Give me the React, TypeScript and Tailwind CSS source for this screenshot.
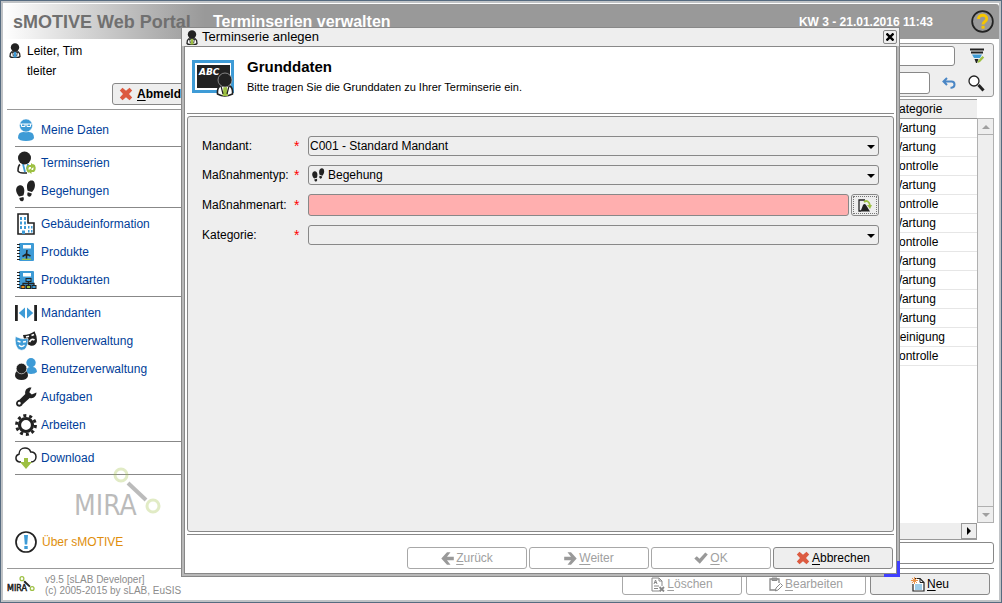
import type { ReactNode } from "react";

const INK = "#222222";
const BLUE = "#3e9bd6";
const GREEN = "#9dc043";

interface IconProps {
  className?: string;
}

function PersonIcon({ className = "", accent = GREEN }: IconProps & { accent?: string }) {
  return (
    <svg viewBox="0 0 12 15" className={className} aria-hidden="true">
      <path d="M2.500 9Q1 10 1 13.500q1 1 2.500 1h5q1.500 0 2.500-1Q11 10 9.500 9z" fill="#fff" stroke={INK} strokeWidth="1.300" />
      <path d="M5 8.500h2l.7 6H4.300z" fill={accent} />
      <path d="M3.500 9l.8 4M8.500 9l-.8 4" stroke={INK} strokeWidth=".8" />
      <circle cx="6" cy="4.500" r="4.200" fill={INK} />
    </svg>
  );
}

function FeetIcon({ className = "" }: IconProps) {
  return (
    <svg viewBox="0 0 20 22" className={className} fill={INK} aria-hidden="true">
      <path d="M3 5.500C6 4.500 8.300 7 8.300 10.500c0 2.500-.6 4-1 5L3 16.500C1 14-.3 11.500.2 9 .5 7 1.500 6 3 5.500z" />
      <path d="M3.300 18l4-1c1 1.800.6 3.700-.8 4.200-1.600.5-3-.9-3.200-3.200z" />
      <path d="M16.500.6c-3-.9-5.300 1.800-5.500 5.200-.1 2.300.3 3.800.7 5l4.300 1.200c2-2.200 3.200-4.700 2.900-7.400C18.700 2.400 17.900 1 16.500.6z" />
      <path d="M11.800 12.300l4 1.100c-.3 2.400-1.700 3.700-3.200 3.200-1.400-.5-1.800-2.300-.8-4.300z" />
    </svg>
  );
}

function UserDataIcon() {
  return (
    <svg viewBox="0 0 22 22" className="size-[22px]" aria-hidden="true">
      <path d="M3 19q0-6 5-6h6q5 0 5 6-1 3-8 3t-8-3z" fill={BLUE} />
      <circle cx="11" cy="6.500" r="6.500" fill={BLUE} stroke="#fff" strokeWidth=".5" />
      <path d="M5 5h12M6.500 5v2.500h3.500V5M12 5v2.500h3.500V5" fill="none" stroke="#fff" strokeWidth="1" />
    </svg>
  );
}

function SeriesIcon() {
  return (
    <svg viewBox="0 0 22 24" className="h-6 w-[22px]" aria-hidden="true">
      <path d="M5 13.500Q3 15 3 20q1 2 5 2h4" fill="#fff" stroke={INK} strokeWidth="1.600" />
      <path d="M8 13l2 8M13 13l-1 5" stroke={BLUE} strokeWidth="1.800" />
      <circle cx="9.500" cy="7" r="6.500" fill={INK} />
      <g fill="none" stroke={GREEN} strokeWidth="2.200">
        <path d="M14 21a4 4 0 0 1-.5-6h4" />
        <path d="M18 14a4 4 0 0 1 .5 6h-4" />
      </g>
      <path d="M16 12l4 3-4 3zM16.500 17v6l-4-3z" fill={GREEN} />
    </svg>
  );
}

function BuildingIcon() {
  return (
    <svg viewBox="0 0 20 22" className="h-[22px] w-5" aria-hidden="true">
      <path d="M2 21V1h10v9h6v11z" fill="#fff" stroke={INK} strokeWidth="1.600" />
      <path
        d="M4 4h2v3H4zM8 4h2v3H8zM4 8.500h2v3H4zM8 8.500h2v3H8zM4 13h2v3H4zM8 13h2v3H8zM12 13h1.500v2.500H12zM15 13h1.500v2.500H15zM12 17h1.500v2.500H12zM15 17h1.500v2.500H15zM6 17.500h3V21H6z"
        fill={BLUE}
      />
    </svg>
  );
}

function NotebookIcon({ kinds = false }: { kinds?: boolean }) {
  return (
    <svg viewBox="0 0 22 20" className="h-5 w-[22px]" aria-hidden="true">
      <rect x="4" y="1" width="15" height="18" rx="1" fill={BLUE} />
      <path d="M2 2.500h3M2 5.500h3M2 8.500h3M2 11.500h3M2 14.500h3M2 17.500h3" stroke={INK} strokeWidth="1.200" />
      <rect x="8" y="3" width="8" height="3.500" fill="#fff" />
      {kinds ? (
        <g>
          <path d="M13.500 11v3M8 15.500v-2h11v2M13.500 13v2" fill="none" stroke={INK} strokeWidth="1.300" />
          <rect x="11" y="8.500" width="5" height="3" fill={BLUE} stroke={INK} />
          <rect x="6" y="15.500" width="4" height="3" fill="#e8901a" stroke={INK} />
          <rect x="11.500" y="15.500" width="4" height="3" fill={GREEN} stroke={INK} />
          <rect x="17" y="15.500" width="4" height="3" fill={BLUE} stroke={INK} />
        </g>
      ) : (
        <g>
          <path d="M11.500 17V12L12 8M11.500 12l4 2M11.500 12L7.500 14.500" fill="none" stroke={INK} strokeWidth="1.500" />
          <path d="M7 17.300h9" stroke={GREEN} strokeWidth="1.300" />
        </g>
      )}
    </svg>
  );
}

function ClientsIcon() {
  return (
    <svg viewBox="0 0 22 16" className="h-4 w-[22px]" aria-hidden="true">
      <path d="M0 0h2.800v16H0zM19.200 0H22v16h-2.800z" fill={INK} />
      <path d="M10 2.500v11L3.800 8zM12 2.500v11L18.200 8z" fill={BLUE} />
    </svg>
  );
}

function MasksIcon() {
  return (
    <svg viewBox="0 0 22 20" className="h-5 w-[22px]" aria-hidden="true">
      <path d="M8 4Q15 4 19.500.3 22.500 6 21.800 11q-1.500 4.500-6.500 3.500L10 12z" fill={INK} />
      <path d="M11 6l3-.8M16.500 4.500l2.500-1M14.500 11q2-4 5-2" fill="none" stroke="#fff" strokeWidth="1.700" />
      <path d="M.5 5.500Q7 9 13 7.500 13.500 15 9.500 18.500q-3 1.800-6.500-.5Q-.8 13 .5 5.500z" fill={BLUE} stroke="#fff" strokeWidth=".6" />
      <path d="M2.500 10l3 1M8 11l3-.5M4 14q2.500 3 5.500 0" fill="none" stroke="#fff" strokeWidth="1.400" />
    </svg>
  );
}

function UsersIcon() {
  return (
    <svg viewBox="0 0 22 22" className="size-[22px]" aria-hidden="true">
      <path d="M11.500 13q0-4 4-4h2q4 0 4.500 5-2 2-6 2-4 0-4.500-3z" fill={BLUE} />
      <circle cx="16" cy="4.800" r="4.700" fill={BLUE} />
      <path d="M0 18q0-5.500 4-5.500h5q4 0 4 5.500-1 4-6.500 4T0 18z" fill={INK} />
      <circle cx="6.500" cy="10.500" r="5.300" fill={INK} stroke="#fff" strokeWidth=".6" />
    </svg>
  );
}

function WrenchIcon() {
  return (
    <svg viewBox="0 0 22 20" className="h-5 w-[22px]" aria-hidden="true">
      <path
        d="M16.500.6l-2.200 4.600 2.500 2.300 4.600-2c.2 4-3 6.500-6.700 5.400L7.500 17.500c-.6 1.800-3 2.800-4.900 1.800C.6 18 .5 15.200 2.300 13.700c.8-.7 1.500-.9 2.200-.9L10.300 7C9.300 3.400 12.500-.3 16.500.6zM4.200 14.800a1.500 1.500 0 1 0 .1 3 1.500 1.500 0 0 0-.1-3z"
        fill={INK}
      />
    </svg>
  );
}

function GearIcon() {
  return (
    <svg viewBox="0 0 22 22" className="size-[22px]" aria-hidden="true">
      <circle cx="11" cy="11" r="6.500" fill="none" stroke={INK} strokeWidth="3.200" />
      <circle cx="11" cy="11" r="9.400" fill="none" stroke={INK} strokeWidth="3" strokeDasharray="3 2.906" />
    </svg>
  );
}

function CloudIcon() {
  return (
    <svg viewBox="0 0 22 22" className="size-[22px]" aria-hidden="true">
      <path
        d="M6 15H4.500C2 14.500.8 12.500 1 10.500 1.200 8.500 2.500 7.500 4 7.200 4 3.500 6.500 1 10 1c3 0 5 1.600 5.700 4 3-.3 5.300 1.800 5.300 4.800 0 3-2 5.200-5 5.200"
        fill="none"
        stroke={INK}
        strokeWidth="1.500"
      />
      <path d="M9 11h4v4h4l-6 7-6-7h4z" fill={GREEN} />
    </svg>
  );
}

function InfoIcon() {
  return (
    <svg viewBox="0 0 22 22" className="size-[22px]" aria-hidden="true">
      <circle cx="11" cy="11" r="10" fill="#fff" stroke={INK} strokeWidth="1.700" />
      <path d="M9 4h4l-.8 9.500H9.800zM9.300 15h3.400v3H9.300z" fill={BLUE} />
    </svg>
  );
}

function CrossIcon({ className = "" }: IconProps) {
  return (
    <svg viewBox="0 0 14 14" className={className} fill="#dc5b41" aria-hidden="true">
      <path d="M3.500.8L7 3.800l3.500-3L13.200 3.500 10 7l3.200 3.500-2.700 2.700L7 10.200l-3.500 3L.8 10.500 4 7 .8 3.500z" />
    </svg>
  );
}

function ArrowIcon({ flip = false }: { flip?: boolean }) {
  return (
    <svg viewBox="0 0 13 13" className={`size-[13px] ${flip ? "rotate-180" : ""}`} fill="#999999" aria-hidden="true">
      <path d="M6 .3h3.500L6 4.700h6.800v3.600H6l3.500 4.400H6L.3 6.500z" />
    </svg>
  );
}

function CheckIcon() {
  return (
    <svg viewBox="0 0 14 12" className="h-3 w-3.5" fill="#999999" aria-hidden="true">
      <path d="M.3 6.500l2.500-2.300L5.500 6.800 11.300.5l2.500 2L5.800 11.700z" />
    </svg>
  );
}

function BoardIcon() {
  return (
    <svg viewBox="0 0 43 38" className="h-[38px] w-[43px]" aria-hidden="true">
      <rect x="1.500" y="2.500" width="39" height="30" fill="#fff" stroke={BLUE} strokeWidth="3" />
      <rect x="5" y="6" width="33" height="23" fill={INK} />
      <text x="7" y="16" fill="#fff" fontSize="9" fontWeight="bold" fontStyle="italic" fontFamily="DejaVu Sans, sans-serif">
        ABC
      </text>
      <path d="M28 27q-3 2-2.500 8 7 4 15 0 .5-6-2.500-8z" fill="#fff" stroke={INK} strokeWidth="1.600" />
      <path d="M31.500 28h3.500l1 9h-5.500z" fill={GREEN} />
      <path d="M29 27l2 8M37 27l-2 8" stroke={INK} strokeWidth="1.200" />
      <circle cx="33" cy="21" r="7" fill={INK} stroke="#c8c8c8" strokeWidth=".6" />
    </svg>
  );
}

function PickIcon() {
  return (
    <svg viewBox="0 0 14 13" className="h-[13px] w-3.5" aria-hidden="true">
      <path d="M7 1H1v11h2" fill="none" stroke={INK} strokeWidth="1.300" />
      <path d="M2.500 12.500L5 6q1.500-2 3 0l4 6.500z" fill={INK} />
      <path d="M6 3q4-3 6 3" fill="none" stroke={GREEN} strokeWidth="1.800" />
      <path d="M9 6h5l-2 4z" fill={GREEN} />
    </svg>
  );
}

function FilterIcon() {
  return (
    <svg viewBox="0 0 16 16" className="size-4" aria-hidden="true">
      <path d="M1 1.500h14M2 4.500h12" stroke={INK} strokeWidth="2" />
      <path d="M3 6.500h10l-2 3.500H5z" fill={BLUE} />
      <path d="M5.500 11h4L8 15H7z" fill={INK} />
      <path d="M8.500 15l.7-2.500L13.500 8l1.700 1.500L11 14z" fill={GREEN} />
    </svg>
  );
}

function UndoIcon() {
  return (
    <svg viewBox="0 0 14 12" className="h-3 w-3.5" aria-hidden="true">
      <path d="M5 1L1.500 4.500 5 8M2 4.500h7.500q3 0 3 3t-3 3.200H8.500" fill="none" stroke="#4a86c5" strokeWidth="2" />
    </svg>
  );
}

function SearchIcon() {
  return (
    <svg viewBox="0 0 17 17" className="size-[17px]" aria-hidden="true">
      <circle cx="6" cy="6" r="5" fill="#fff" stroke={INK} strokeWidth="1.300" />
      <path d="M10.500 10l5 5.500" stroke={INK} strokeWidth="3" />
    </svg>
  );
}

function HelpIcon() {
  return (
    <svg viewBox="0 0 24 24" className="size-[23px]" aria-hidden="true">
      <circle cx="12" cy="12" r="10.800" fill="none" stroke={INK} strokeWidth="1.800" />
      <path d="M7.800 9.300c0-5 8.600-5 8.600-.3 0 3-3.900 3.200-3.900 6" fill="none" stroke="#f7c600" strokeWidth="3" />
      <rect x="11" y="16.500" width="3.200" height="3" fill="#f7c600" />
    </svg>
  );
}

function DeleteDocIcon() {
  return (
    <svg viewBox="0 0 14 15" className="h-[15px] w-3.5" fill="none" stroke="#888888" aria-hidden="true">
      <path d="M8 14H1V1h7l3 3v5M8 1v3h3" />
      <path d="M3 7l1.500-4L6 7M3.500 5.500h2M3 9h5M3 11.500h4" />
      <path d="M8.500 10l4.500 4.500M13 10l-4.500 4.500" strokeWidth="1.800" />
    </svg>
  );
}

function EditDocIcon() {
  return (
    <svg viewBox="0 0 14 15" className="h-[15px] w-3.5" fill="none" stroke="#888888" aria-hidden="true">
      <path d="M7 13H1V2h9v4" strokeWidth="1.300" />
      <path d="M3 1h5v2.500H3z" fill="#999999" />
      <path d="M6.500 14l.5-3 4.500-4.500 2 2L9 13z" />
    </svg>
  );
}

function NewDocIcon() {
  return (
    <svg viewBox="0 0 14 15" className="h-[15px] w-3.5" aria-hidden="true">
      <path d="M4 1.500h5l4 4V14H2V7" fill="#fff" stroke={INK} strokeWidth="1.200" />
      <path d="M9 1.500v4h4" fill="none" stroke={INK} />
      <path d="M4 8h7M4 10h7M4 12h7" stroke={BLUE} strokeWidth="1.200" />
      <path d="M3.500 0v7M0 3.500h7M1 1l5 5M6 1L1 6" stroke="#e98b3c" strokeWidth=".9" />
    </svg>
  );
}

function MiraLogo({ faded = false }: { faded?: boolean }) {
  return (
    <svg viewBox="0 0 88 56" className={faded ? "h-14 w-[88px] opacity-30" : "h-[18px] w-7"} aria-label="MIRA">
      <text x="0" y="48" fontSize="28" fill={INK} stroke={INK} strokeWidth={faded ? 0 : 1.5} fontFamily="Liberation Sans Narrow, DejaVu Sans Condensed, sans-serif">
        MIRA
      </text>
      <path d="M54 16l18 17" stroke={INK} strokeWidth={faded ? 4 : 6} />
      <circle cx="47" cy="8" r="6" fill="none" stroke={GREEN} strokeWidth={faded ? 3 : 4} />
      <circle cx="79" cy="39" r="6" fill="none" stroke={GREEN} strokeWidth={faded ? 3 : 4} />
    </svg>
  );
}

const navGroups: { label: string; icon: ReactNode }[][] = [
  [{ label: "Meine Daten", icon: <UserDataIcon /> }],
  [
    { label: "Terminserien", icon: <SeriesIcon /> },
    { label: "Begehungen", icon: <FeetIcon className="h-[22px] w-5" /> },
  ],
  [
    { label: "Gebäudeinformation", icon: <BuildingIcon /> },
    { label: "Produkte", icon: <NotebookIcon /> },
    { label: "Produktarten", icon: <NotebookIcon kinds /> },
  ],
  [
    { label: "Mandanten", icon: <ClientsIcon /> },
    { label: "Rollenverwaltung", icon: <MasksIcon /> },
    { label: "Benutzerverwaltung", icon: <UsersIcon /> },
    { label: "Aufgaben", icon: <WrenchIcon /> },
    { label: "Arbeiten", icon: <GearIcon /> },
  ],
  [{ label: "Download", icon: <CloudIcon /> }],
];

const categories = [
  "Wartung",
  "Wartung",
  "Kontrolle",
  "Wartung",
  "Kontrolle",
  "Wartung",
  "Kontrolle",
  "Wartung",
  "Wartung",
  "Wartung",
  "Wartung",
  "Reinigung",
  "Kontrolle",
];

interface ActionButtonProps {
  icon: ReactNode;
  label: string;
  disabled?: boolean;
}

function ActionButton({ icon, label, disabled = false }: ActionButtonProps) {
  return (
    <button
      type="button"
      disabled={disabled}
      className="flex h-[22px] w-[120px] items-center justify-center gap-0.5 rounded-[3px] border border-[#888888] bg-[#eeeeee] disabled:border-[#a8a8a8] disabled:bg-white disabled:text-[#a0a0a0]"
    >
      {icon}
      <span>
        <span className="underline underline-offset-2">{label[0]}</span>
        {label.slice(1)}
      </span>
    </button>
  );
}

function Sidebar() {
  return (
    <aside className="flex w-[202px] shrink-0 flex-col pl-1">
      <div className="flex gap-1.5 pt-0.5 pl-0.5">
        <PersonIcon className="mt-0.5 h-[15px] w-3" accent={BLUE} />
        <div className="leading-5">
          <p>Leiter, Tim</p>
          <p>tleiter</p>
        </div>
      </div>
      <button
        type="button"
        className="mt-0.5 ml-[105px] flex h-[22px] w-[90px] items-center gap-1 rounded-[3px] border border-[#888888] bg-[#eeeeee] pl-1.5 font-bold"
      >
        <CrossIcon className="size-3.5" />
        <span>
          <span className="underline underline-offset-2">A</span>bmelden
        </span>
      </button>
      <nav className="mt-1 border-t border-[#999999] pt-1 pl-2">
        {navGroups.map((group) => (
          <ul key={group[0].label} className="border-b border-[#888888] py-0.5">
            {group.map((item) => (
              <li key={item.label}>
                <a href="#" className="flex h-7 items-center gap-1 text-[#003d99]">
                  <span className="flex w-[22px] justify-center">{item.icon}</span>
                  {item.label}
                </a>
              </li>
            ))}
          </ul>
        ))}
      </nav>
      <div className="-mt-2 pl-[67px]">
        <MiraLogo faded />
      </div>
      <a href="#" className="mt-2 flex items-center gap-[5px] pl-2 text-[#e08e0b]">
        <InfoIcon />
        Über sMOTIVE
      </a>
      <footer className="mt-auto flex h-8 items-center gap-2.5 border-t border-[#999999] text-[10px] leading-[11px] text-[#8c8c8c]">
        <MiraLogo />
        <p>
          v9.5 [sLAB Developer]
          <br />
          (c) 2005-2015 by sLAB, EuSIS
        </p>
      </footer>
    </aside>
  );
}

function SeriesPage() {
  return (
    <main className="flex min-w-0 flex-1 flex-col pr-[5px]">
      <section className="mt-1 flex h-[54px] flex-col justify-between rounded-[3px] border border-[#999999] bg-[#eeeeee] p-0.5 pr-2">
        <div className="flex items-center">
          <input aria-label="Suche" className="h-5 min-w-0 flex-1 rounded-[3px] border border-[#888888] bg-white" />
          <button type="button" aria-label="Filter" className="ml-3.5">
            <FilterIcon />
          </button>
        </div>
        <div className="flex items-center">
          <input aria-label="Filterwert" className="h-[22px] min-w-0 flex-1 rounded-[3px] border border-[#888888] bg-white" />
          <button type="button" aria-label="Zurücksetzen" className="ml-3">
            <UndoIcon />
          </button>
          <button type="button" aria-label="Suchen" className="ml-3">
            <SearchIcon />
          </button>
        </div>
      </section>
      <div className="mt-0.5 flex min-h-0 flex-1">
        <div className="flex min-w-0 flex-1 flex-col">
          <table className="w-full table-fixed border-collapse">
            <thead>
              <tr className="h-[19px] border-y border-[#999999] bg-[#eeeeee]">
                <th />
                <th className="w-[86px] text-left font-normal">Kategorie</th>
              </tr>
            </thead>
            <tbody>
              {categories.map((category, index) => (
                <tr key={index} className="h-[19px] border-b border-[#e6e6e6]">
                  <td />
                  <td>{category}</td>
                </tr>
              ))}
            </tbody>
          </table>
          <div className="mt-auto flex h-[17px] justify-end border-b border-[#999999] bg-[#eeeeee]">
            <button type="button" aria-label="Nach rechts" className="flex w-4 items-center justify-center border border-[#999999]">
              <svg viewBox="0 0 4 8" className="h-2 w-1" aria-hidden="true">
                <path d="M0 0l4 4-4 4z" />
              </svg>
            </button>
          </div>
        </div>
        <div className="mt-[19px] mb-[17px] flex w-[17px] flex-col border border-[#b0b0b0] bg-[#eeeeee]">
          <button type="button" aria-label="Nach oben" className="flex h-4 items-center justify-center border-b border-[#b0b0b0]">
            <svg viewBox="0 0 8 4" className="h-1 w-2" fill="#a0a0a0" aria-hidden="true">
              <path d="M0 4l4-4 4 4z" />
            </svg>
          </button>
          <button type="button" aria-label="Nach unten" className="mt-auto flex h-4 items-center justify-center border-t border-[#b0b0b0]">
            <svg viewBox="0 0 8 4" className="h-1 w-2" fill="#a0a0a0" aria-hidden="true">
              <path d="M0 0l4 4 4-4z" />
            </svg>
          </button>
        </div>
      </div>
      <input aria-label="Bemerkung" className="mt-0.5 h-[22px] rounded-[3px] border border-[#888888] bg-white" />
      <div className="mt-1 flex justify-end gap-1 border-t border-[#888888] pt-1 pr-1 pb-[5px]">
        <ActionButton icon={<DeleteDocIcon />} label="Löschen" disabled />
        <ActionButton icon={<EditDocIcon />} label="Bearbeiten" disabled />
        <ActionButton icon={<NewDocIcon />} label="Neu" />
      </div>
    </main>
  );
}

interface FieldProps {
  id: string;
  label: string;
  children: ReactNode;
}

function Field({ id, label, children }: FieldProps) {
  return (
    <div className="flex items-center">
      <label htmlFor={id} className="w-[92px] shrink-0">
        {label}
      </label>
      <span className="w-3.5 shrink-0 text-sm leading-4 text-[#ff0000]">*</span>
      {children}
    </div>
  );
}

interface ComboProps {
  id: string;
  value?: string;
  icon?: ReactNode;
}

function Combo({ id, value = "", icon }: ComboProps) {
  return (
    <div className="relative min-w-0 flex-1">
      <select
        id={id}
        defaultValue={value}
        className={`block h-5 w-full appearance-none rounded-[3px] border border-[#888888] bg-[#eeeeee] ${icon ? "pl-[19px]" : "pl-px"}`}
      >
        <option>{value}</option>
      </select>
      {icon ? <span className="pointer-events-none absolute top-[3px] left-1">{icon}</span> : null}
      <svg viewBox="0 0 8 4" className="pointer-events-none absolute top-[9px] right-1 h-1 w-2" aria-hidden="true">
        <path d="M0 0h8L4 4z" />
      </svg>
    </div>
  );
}

function CreateSeriesDialog() {
  return (
    <div
      role="dialog"
      aria-labelledby="dialog-title"
      className="absolute top-6 right-[99px] bottom-[23px] left-[178px] flex flex-col border border-[#888888] bg-[#b8b8b8]"
    >
      <div className="flex h-[18px] items-center bg-[#eeeeee] pr-0.5 pl-1">
        <PersonIcon className="h-[15px] w-3" />
        <h2 id="dialog-title" className="ml-1 text-[13px] leading-4">
          Terminserie anlegen
        </h2>
        <button
          type="button"
          aria-label="Schließen"
          className="ml-auto flex size-3.5 items-center justify-center rounded-[2px] border border-[#888888]"
        >
          <svg viewBox="0 0 8 8" className="size-2" stroke="#000" strokeWidth="2.400" aria-hidden="true">
            <path d="M.5.5l7 7M7.500.5l-7 7" />
          </svg>
        </button>
      </div>
      <div className="mx-0.5 mb-0.5 flex flex-1 flex-col border border-[#888888] bg-white px-0.5">
        <header className="flex h-[67px] gap-3 border-b border-[#888888] pt-3 pl-[5px]">
          <BoardIcon />
          <div>
            <h1 className="text-[15px] leading-4 font-bold">Grunddaten</h1>
            <p className="mt-1.5 text-[11px] leading-3">
              Bitte tragen Sie die Grunddaten zu Ihrer Terminserie ein.
            </p>
          </div>
        </header>
        <form className="mt-0.5 flex flex-1 flex-col gap-[9px] rounded-[3px] border border-[#888888] bg-[#eeeeee] pt-[19px] pr-3.5 pl-3.5">
          <Field id="mandant" label="Mandant:">
            <Combo id="mandant" value="C001 - Standard Mandant" />
          </Field>
          <Field id="typ" label="Maßnahmentyp:">
            <Combo id="typ" value="Begehung" icon={<FeetIcon className="h-3.5 w-[13px]" />} />
          </Field>
          <Field id="art" label="Maßnahmenart:">
            <input id="art" className="h-[22px] min-w-0 flex-1 rounded-[3px] border border-[#888888] bg-[#ffafaf]" />
            <button
              type="button"
              aria-label="Maßnahmenart auswählen"
              className="ml-0.5 h-[22px] w-7 rounded-[3px] border border-[#888888] p-px"
            >
              <span className="flex h-full items-center justify-center border border-dotted border-[#777777]">
                <PickIcon />
              </span>
            </button>
          </Field>
          <Field id="kategorie" label="Kategorie:">
            <Combo id="kategorie" />
          </Field>
        </form>
        <div className="mt-0.5 flex justify-end gap-0.5 border-t border-[#888888] pt-3 pr-px pb-1">
          <ActionButton icon={<ArrowIcon />} label="Zurück" disabled />
          <ActionButton icon={<ArrowIcon flip />} label="Weiter" disabled />
          <ActionButton icon={<CheckIcon />} label="OK" disabled />
          <ActionButton icon={<CrossIcon className="size-3.5" />} label="Abbrechen" />
        </div>
      </div>
      <div className="absolute -right-px -bottom-px size-4 border-r-[3px] border-b-[3px] border-[#4040ff]" />
    </div>
  );
}

export default function App() {
  return (
    <div className="flex min-h-screen flex-col border border-[#566b80] bg-white font-['Liberation_Sans',Arial,sans-serif] text-xs text-black">
      <div className="relative flex flex-1 flex-col border-2 border-[#c0c3c6]">
        <header className="mt-px flex h-[35px] items-center rounded-tr-[3px] bg-[#999999] font-bold text-white">
          <span className="flex h-full w-[202px] items-center bg-linear-to-r from-white to-[#999999] pt-px pl-2.5 text-lg text-[#707070]">
            sMOTIVE Web Portal
          </span>
          <span className="pt-px pl-2 text-base">Terminserien verwalten</span>
          <time className="mr-[38px] ml-auto">KW 3 - 21.01.2016 11:43</time>
          <button type="button" aria-label="Hilfe" className="mr-[5px]">
            <HelpIcon />
          </button>
        </header>
        <div className="flex flex-1">
          <Sidebar />
          <SeriesPage />
        </div>
        <CreateSeriesDialog />
      </div>
    </div>
  );
}
